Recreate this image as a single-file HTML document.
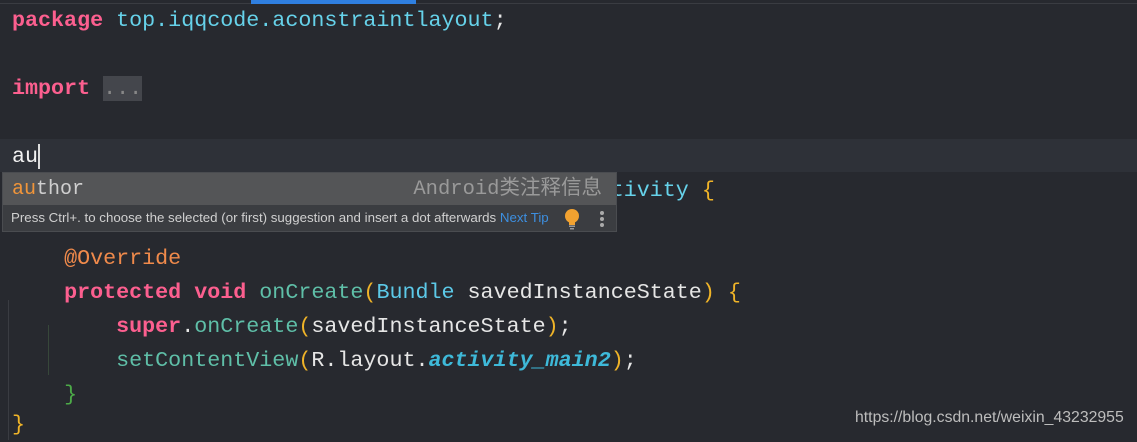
<!DOCTYPE html>
<html><head><meta charset="utf-8"><style>
body{margin:0;width:1137px;height:440px;background:#27292f;overflow:hidden;position:relative;font-family:"Liberation Mono","DejaVu Sans Mono",monospace}
.l{position:absolute;left:12px;font-size:21.7px;line-height:34px;height:34px;white-space:pre;color:#e6e6e6}
.k{color:#fc5f8f;font-weight:bold}.p{color:#66d2ea}.f{color:#5fbfa8}.y{color:#f0b428}.a{color:#f08a4b}.c{color:#5cc9e8}.it{font-style:italic;font-weight:bold;color:#3eb9d9}.g{color:#4caa48}.w{color:#f2f2f2}
</style></head><body>
<div style="position:absolute;left:0;top:3px;width:1137px;height:1px;background:#3a3c42"></div>
<div style="position:absolute;left:251px;top:0;width:165px;height:4px;background:#2f7fe0"></div>
<div style="position:absolute;left:0;top:139px;width:1137px;height:33px;background:#2e3138"></div>
<div style="position:absolute;left:8px;top:300px;width:1px;height:140px;background:#3a3c42"></div>
<div style="position:absolute;left:48px;top:325px;width:1px;height:50px;background:#37473a"></div>
<div class="l" style="top:4px"><span class="k">package</span> <span class="p">top.iqqcode.aconstraintlayout</span>;</div>
<div class="l" style="top:72px"><span class="k">import</span> <span style="background:#44464c;color:#888">...</span></div>
<div class="l" style="top:140px"><span class="w">au</span><span style="border-left:2px solid #ddd"></span></div>
<div class="l" style="top:174px"><span class="k">public class</span> <span class="p">MainActivity2</span> <span class="k">extends</span> <span class="p">AppCompatActivity</span> <span class="y">{</span></div>
<div class="l" style="top:242px">    <span class="a">@Override</span></div>
<div class="l" style="top:276px">    <span class="k">protected void</span> <span class="f">onCreate</span><span class="y">(</span><span class="c">Bundle</span> savedInstanceState<span class="y">)</span> <span class="y">{</span></div>
<div class="l" style="top:310px">        <span class="k">super</span>.<span class="f">onCreate</span><span class="y">(</span>savedInstanceState<span class="y">)</span>;</div>
<div class="l" style="top:344px">        <span class="f">setContentView</span><span class="y">(</span>R.layout.<span class="it">activity_main2</span><span class="y">)</span>;</div>
<div class="l" style="top:378px">    <span class="g">}</span></div>
<div class="l" style="top:408px"><span class="y">}</span></div>
<div style="position:absolute;left:2px;top:172px;width:615px;height:60px;background:#3b3d41;border:1px solid #4a4c50;box-sizing:border-box">
 <div style="position:absolute;left:0;top:0;width:613px;height:32px;background:#545557"></div>
 <div style="position:absolute;left:9px;top:2px;font-size:20px;line-height:30px;color:#cfcfcf;white-space:pre"><span style="color:#f0953a">au</span>thor</div>
 <div style="position:absolute;right:14px;top:2px;font-family:'Liberation Mono','Noto Sans CJK SC',monospace;font-size:20.5px;line-height:30px;color:#9a9a9a;white-space:pre">Android类注释信息</div>
 <div style="position:absolute;left:8px;top:35px;font-family:'Liberation Sans',sans-serif;font-size:13.3px;line-height:20px;color:#d0d0d0;white-space:pre">Press Ctrl+. to choose the selected (or first) suggestion and insert a dot afterwards <span style="color:#3d8fe0">Next Tip</span></div>
 <svg style="position:absolute;left:560px;top:35px" width="18" height="22" viewBox="0 0 18 22"><circle cx="9" cy="8" r="7" fill="#f2a230"/><rect x="6" y="13" width="6" height="4" fill="#f2a230"/><rect x="6" y="17.5" width="6" height="1.5" fill="#999"/><rect x="7" y="20" width="4" height="1.5" fill="#999"/></svg>
 <div style="position:absolute;left:597px;top:38px;width:4px;height:4px;border-radius:2px;background:#aaa;box-shadow:0 6px 0 #aaa,0 12px 0 #aaa"></div>
</div>
<div style="position:absolute;left:855px;top:409px;font-family:'Liberation Sans',sans-serif;font-size:15.8px;color:#bdbdbd">https://blog.csdn.net/weixin_43232955</div>
</body></html>
